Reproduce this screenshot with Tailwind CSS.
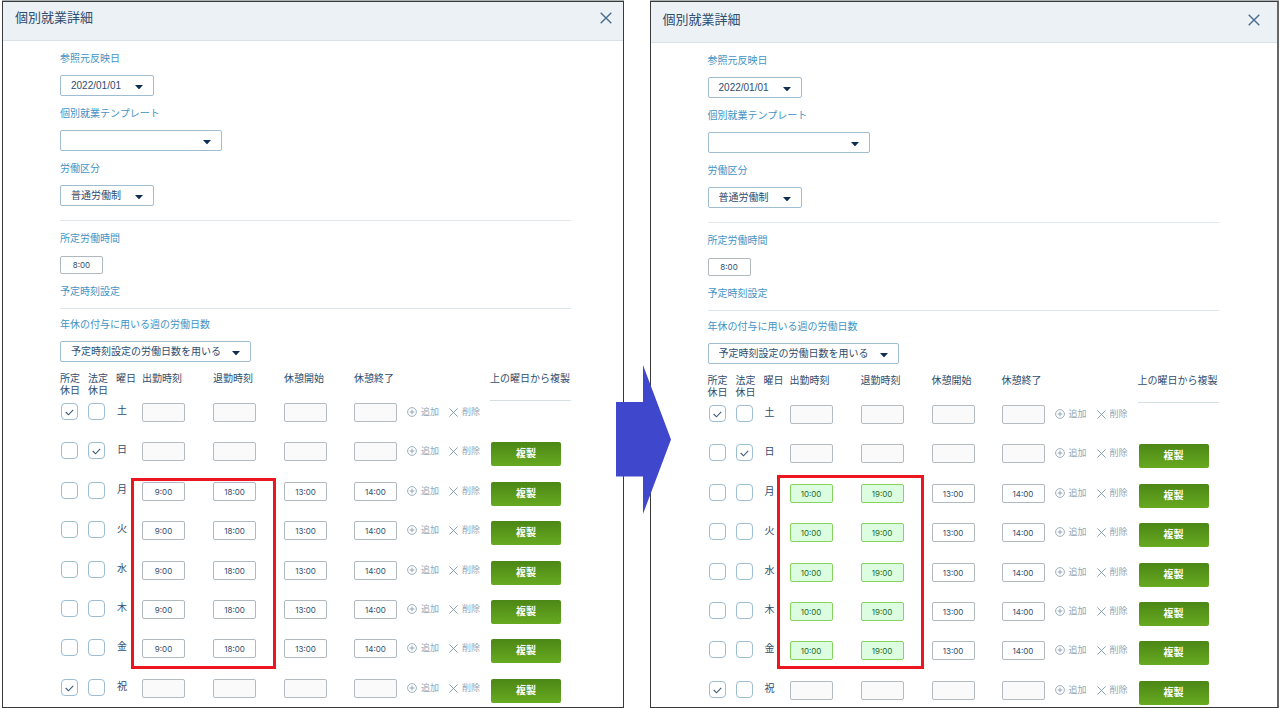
<!DOCTYPE html>
<html lang="ja">
<head>
<meta charset="utf-8">
<title>個別就業詳細</title>
<script src="https://cdn.jsdelivr.net/npm/@tailwindcss/browser@4"></script>
</head>
<body class="bg-white font-['Liberation_Sans','Noto_Sans_CJK_JP',sans-serif] text-[#2f4d6e]">
<main id="app" class="flex min-h-screen pt-px pl-[2px] pr-px text-[10px] leading-4"></main>

<script>
const caret = `<svg class="pointer-events-none absolute right-[11px] top-[10px]" width="8" height="5" viewBox="0 0 8 5" aria-hidden="true"><path d="M0 0h8L4.6 3.8a.8.8 0 0 1-1.2 0z" fill="#0d2f55"/></svg>`;
const selectBox = (id, width, text) => `
  <div class="relative mt-[8px] ${width}">
    <select id="${id}" class="block h-[21px] w-full appearance-none rounded-[2px] border border-[#9fbcd1] bg-white pl-[10px] text-[10px] leading-4"><option>${text}</option></select>${caret}
  </div>`;
const label = (id, text, space) => `<label for="${id}" class="block text-[#3f94c5] ${space}">${text}</label>`;
const check = (on, name) => `<input type="checkbox" aria-label="${name}" ${on ? 'checked' : ''} class="block size-[17px] appearance-none rounded-[4px] border border-[#9dbdd3] bg-white">
  ${on ? '<svg class="pointer-events-none absolute left-[4px] top-[6px]" width="9" height="7" viewBox="0 0 9 7" fill="none" stroke="#3d5a78" stroke-width="1.1" aria-hidden="true"><path d="M.7 3l2.8 2.8L8.2.8"/></svg>' : ''}`;
const timeInput = (value, look, name) => `<input type="text" aria-label="${name}" value="${value}" class="block h-[19px] w-[43px] rounded-[2px] border text-center font-['Inter',sans-serif] text-[8px] ${look}">`;

const off = 'border-[#b4bcc1] bg-[#fafafa]';
const plain = 'border-[#b0b9be] bg-white';
const changed = 'border-[#86d35f] bg-[#dcfde0] text-[#1c6b2a]';
const days = [['土',1,0,0],['日',0,1,0],['月',0,0,1],['火',0,0,1],['水',0,0,1],['木',0,0,1],['金',0,0,1],['祝',1,0,0]];
const heights = ['h-[39px]', 'h-[40px]', 'h-[39px]', 'h-[40px]', 'h-[39px]', 'h-[39px]', 'h-[40px]', 'h-[24px]'];

const row = (p, [day, a, b, work], i) => {
  const hl = p.edited ? changed : plain;
  const cells = work ? [[p.start, hl], [p.end, hl], ['13:00', plain], ['14:00', plain]] : [['', off], ['', off], ['', off], ['', off]];
  const names = ['出勤時刻', '退勤時刻', '休憩開始', '休憩終了'];
  return `<tr class="align-top ${heights[i]}">
    <td class="p-0 pl-px"><div class="relative">${check(a, day + ' 所定休日')}</div></td>
    <td class="p-0"><div class="relative">${check(b, day + ' 法定休日')}</div></td>
    <th scope="row" class="p-0 pl-px text-left font-normal">${day}</th>
    ${cells.map((c, n) => `<td class="p-0">${timeInput(c[0], c[1], day + ' ' + names[n])}</td>`).join('')}
    <td class="p-0"><button type="button" class="mt-px flex items-center gap-[4px] whitespace-nowrap text-[9px] leading-4 text-[#93a7b6]"><svg width="10" height="10" viewBox="0 0 10 10" fill="none" stroke="currentColor" aria-hidden="true"><circle cx="5" cy="5" r="4.4" stroke-width=".9"/><path d="M5 2.6v4.8M2.6 5h4.8"/></svg>追加</button></td>
    <td class="p-0"><button type="button" class="mt-px flex items-center gap-[4px] whitespace-nowrap text-[9px] leading-4 text-[#93a7b6]"><svg width="9" height="9" viewBox="0 0 9 9" fill="none" stroke="#7f97a9" stroke-width=".9" aria-hidden="true"><path d="M.4.4l8.2 8.2M8.6.4L.4 8.6"/></svg>削除</button></td>
    <td class="p-0">${i ? '<button type="button" class="ml-px block h-[24px] w-[70px] rounded-[2px] bg-linear-to-b from-[#4c8716] to-[#67aa20] text-[10px] font-bold leading-4 text-white">複製</button>' : ''}</td>
  </tr>`;
};

const panel = (p) => `
<section aria-label="個別就業詳細" class="border shadow-[0_-1px_0_#a9b3b5] ${p.box}">
  <header class="flex items-start justify-between border-b border-[#d9e1e7] bg-[#ebf1f5] pl-[12px] ${p.head}">
    <h1 class="text-[13px] leading-5">個別就業詳細</h1>
    <button type="button" aria-label="閉じる" class="mt-[4px]"><svg width="12" height="12" viewBox="0 0 12 12" fill="none" stroke="#4a6d8f" stroke-width="1.4"><path d="M.7.7l10.6 10.6M11.3.7L.7 11.3"/></svg></button>
  </header>
  <div class="ml-[57px] max-w-[511px] pt-[10px]">
    ${label(p.id + '-date', '参照元反映日', '')}${selectBox(p.id + '-date', 'w-[94px]', '2022/01/01')}
    ${label(p.id + '-tpl', '個別就業テンプレート', 'mt-[10px]')}${selectBox(p.id + '-tpl', 'w-[162px]', '')}
    ${label(p.id + '-type', '労働区分', 'mt-[10px]')}${selectBox(p.id + '-type', 'w-[94px]', '普通労働制')}
    <hr class="mt-[14px] border-[#e2e8eb]">
    ${label(p.id + '-hours', '所定労働時間', 'mt-[10px]')}
    <input id="${p.id}-hours" type="text" value="8:00" class="mt-[9px] block h-[18px] w-[43px] rounded-[2px] border border-[#b0b9be] bg-white text-center font-['Inter',sans-serif] text-[8px]">
    <h2 class="mt-[10px] text-[#3f94c5]">予定時刻設定</h2>
    <hr class="mt-[8px] border-[#dce6ea]">
    ${label(p.id + '-days', '年休の付与に用いる週の労働日数', 'mt-[8px]')}${selectBox(p.id + '-days', 'w-[191px]', '予定時刻設定の労働日数を用いる')}
    <div class="relative mt-[10px]">
      <table class="w-full table-fixed border-collapse">
        <colgroup><col class="w-[28px]"><col class="w-[28px]"><col class="w-[26px]"><col class="w-[71px]"><col class="w-[71px]"><col class="w-[70px]"><col class="w-[53px]"><col class="w-[42px]"><col class="w-[41px]"><col></colgroup>
        <thead>
          <tr class="h-[31px] text-left align-top leading-3">
            <th class="p-0 pt-px font-normal">所定<br>休日</th><th class="p-0 pt-px font-normal">法定<br>休日</th><th class="p-0 pt-px font-normal">曜日</th>
            <th class="p-0 pt-px font-normal">出勤時刻</th><th class="p-0 pt-px font-normal">退勤時刻</th><th class="p-0 pt-px font-normal">休憩開始</th><th class="p-0 pt-px font-normal">休憩終了</th>
            <th class="p-0"></th><th class="p-0"></th>
            <th class="p-0 pt-px font-normal"><div class="h-[28px] whitespace-nowrap border-b border-[#d5e0e2]">上の曜日から複製</div></th>
          </tr>
        </thead>
        <tbody>${days.map((d, i) => row(p, d, i)).join('')}</tbody>
      </table>
      <div class="pointer-events-none absolute border-[3px] border-[#ec1620] ${p.mark}"></div>
    </div>
  </div>
</section>`;

document.getElementById('app').innerHTML =
  panel({ id: 'before', start: '9:00', end: '18:00', edited: false, box: 'flex-[622] border-[#3a3a3a]', head: 'h-[39px] pt-[6px] pr-[11px]', mark: 'left-[71px] top-[106px] h-[191px] w-[145px]' }) +
  `<div class="relative w-[26px] shrink-0"><svg class="absolute -left-[8px] top-[364px]" width="55" height="149" viewBox="0 0 55 149" role="img" aria-label="変更後"><path d="M0 37h27V0l28 74.500L27 149v-37.500H0z" fill="#3f48cc"/></svg></div>` +
  panel({ id: 'after', start: '10:00', end: '19:00', edited: true, box: 'flex-[629] border-[#3a3a3a] border-r-2 border-r-[#666666]', head: 'h-[41px] pt-[8px] pr-[17px]', mark: 'left-[69px] top-[101px] h-[194px] w-[147px]' });
</script>
</body>
</html>
